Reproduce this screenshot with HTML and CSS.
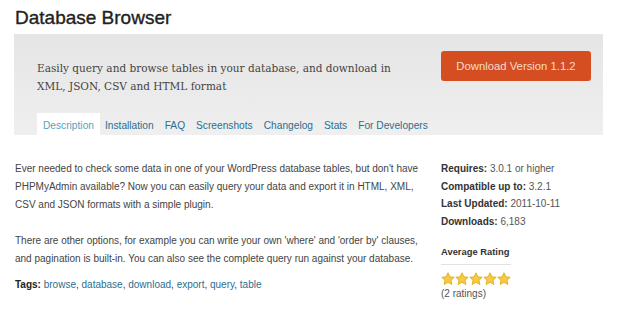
FILE: index.html
```html
<!DOCTYPE html>
<html>
<head>
<meta charset="utf-8">
<link rel="stylesheet" href="styles.css">
</head>
<body>
<h1 class="title">Database Browser</h1>
<div class="header">
  <div class="header-top">
    <p class="summary">Easily query and browse tables in your database, and download in XML, JSON, CSV and HTML format</p>
    <a class="download">Download Version 1.1.2</a>
  </div>
  <ul class="tabs">
    <li class="tab active">Description</li>
    <li class="tab">Installation</li>
    <li class="tab">FAQ</li>
    <li class="tab">Screenshots</li>
    <li class="tab">Changelog</li>
    <li class="tab">Stats</li>
    <li class="tab">For Developers</li>
  </ul>
</div>
<div class="content">
  <div class="main">
    <p>Ever needed to check some data in one of your WordPress database tables, but don't have PHPMyAdmin available? Now you can easily query your data and export it in HTML, XML, CSV and JSON formats with a simple plugin.</p>
    <p class="last">There are other options, for example you can write your own 'where' and 'order by' clauses, and pagination is built-in. You can also see the complete query run against your database.</p>
    <p class="tags"><b>Tags:</b> <a>browse</a>, <a>database</a>, <a>download</a>, <a>export</a>, <a>query</a>, <a>table</a></p>
  </div>
  <div class="side">
    <ul class="meta">
      <li><b>Requires:</b> 3.0.1 or higher</li>
      <li><b>Compatible up to:</b> 3.2.1</li>
      <li><b>Last Updated:</b> 2011-10-11</li>
      <li><b>Downloads:</b> 6,183</li>
    </ul>
    <h4 class="rating-title">Average Rating</h4>
    <div class="stars">
      <svg viewBox="0 0 14 14" class="star"><path d="M7 .8l1.9 4 4.3.5-3.2 2.9.9 4.3L7 10.3 3.1 12.5 4 8.2.8 5.3l4.3-.5z"/></svg>
      <svg viewBox="0 0 14 14" class="star"><path d="M7 .8l1.9 4 4.3.5-3.2 2.9.9 4.3L7 10.3 3.1 12.5 4 8.2.8 5.3l4.3-.5z"/></svg>
      <svg viewBox="0 0 14 14" class="star"><path d="M7 .8l1.9 4 4.3.5-3.2 2.9.9 4.3L7 10.3 3.1 12.5 4 8.2.8 5.3l4.3-.5z"/></svg>
      <svg viewBox="0 0 14 14" class="star"><path d="M7 .8l1.9 4 4.3.5-3.2 2.9.9 4.3L7 10.3 3.1 12.5 4 8.2.8 5.3l4.3-.5z"/></svg>
      <svg viewBox="0 0 14 14" class="star"><path d="M7 .8l1.9 4 4.3.5-3.2 2.9.9 4.3L7 10.3 3.1 12.5 4 8.2.8 5.3l4.3-.5z"/></svg>
    </div>
    <div class="count">(2 ratings)</div>
  </div>
</div>
</body>
</html>
```
FILE: styles.css
```css
html, body { margin: 0; padding: 0; background: #fff; }
body { font-family: "Liberation Sans", Arial, sans-serif; color: #333; width: 620px; height: 310px; overflow: hidden; }
.title { margin: 0; padding: 7px 0 0 15px; font-size: 19px; font-weight: normal; color: #222; height: 27px; line-height: 22px; box-sizing: border-box; -webkit-text-stroke: 0.35px #222; }
.header { margin: 7px 17px 0 14px; background: linear-gradient(#e5e5e5, #efefef); height: 101px; display: flex; flex-direction: column; }
.header-top { display: flex; justify-content: space-between; padding: 17px 12px 0 23px; height: 61px; box-sizing: border-box; }
.summary { margin: 0; padding-top: 8px; width: 380px; font-family: "DejaVu Serif", Georgia, serif; font-stretch: condensed; font-size: 11.7px; line-height: 18px; color: #444; }
.download { background: #d54e21; color: #f5dacd; border-radius: 3px; width: 150px; height: 30px; line-height: 30px; text-align: center; font-size: 11.3px; }
.tabs { list-style: none; margin: 0; padding: 0 0 0 23px; display: flex; align-items: flex-end; flex: 1; }
.tab { font-size: 10.2px; color: #2a6f8f; padding: 0 5px; height: 22px; line-height: 25px; margin-right: 1px; }
.tab.active { background: #fff; color: #5aa0bb; padding: 0 6px; margin-right: 0; }
.content { display: flex; padding: 25px 0 0 15px; }
.main { width: 420px; font-size: 10px; line-height: 18px; color: #444; }
.main p { margin: 0 0 18px; }
.main p.last { margin-bottom: 8px; }
.main a { color: #2a6f8f; }
.main b { color: #222; }
.side { margin-left: 6px; }
.meta { list-style: none; margin: 0; padding: 0; font-size: 10px; line-height: 17.7px; color: #555; }
.meta b { color: #333; }
.rating-title { margin: 15px 0 0; font-size: 9.4px; color: #333; width: 70px; padding-bottom: 6px; border-bottom: 1px solid #e2e2e2; line-height: 12px; white-space: nowrap; }
.stars { display: flex; gap: 0; margin-top: 7px; }
.star { width: 14px; height: 14px; fill: #f7c948; stroke: #e0a800; stroke-width: 0.8; }
.count { font-size: 10px; color: #555; line-height: 12px; margin-top: 2px; }
```
